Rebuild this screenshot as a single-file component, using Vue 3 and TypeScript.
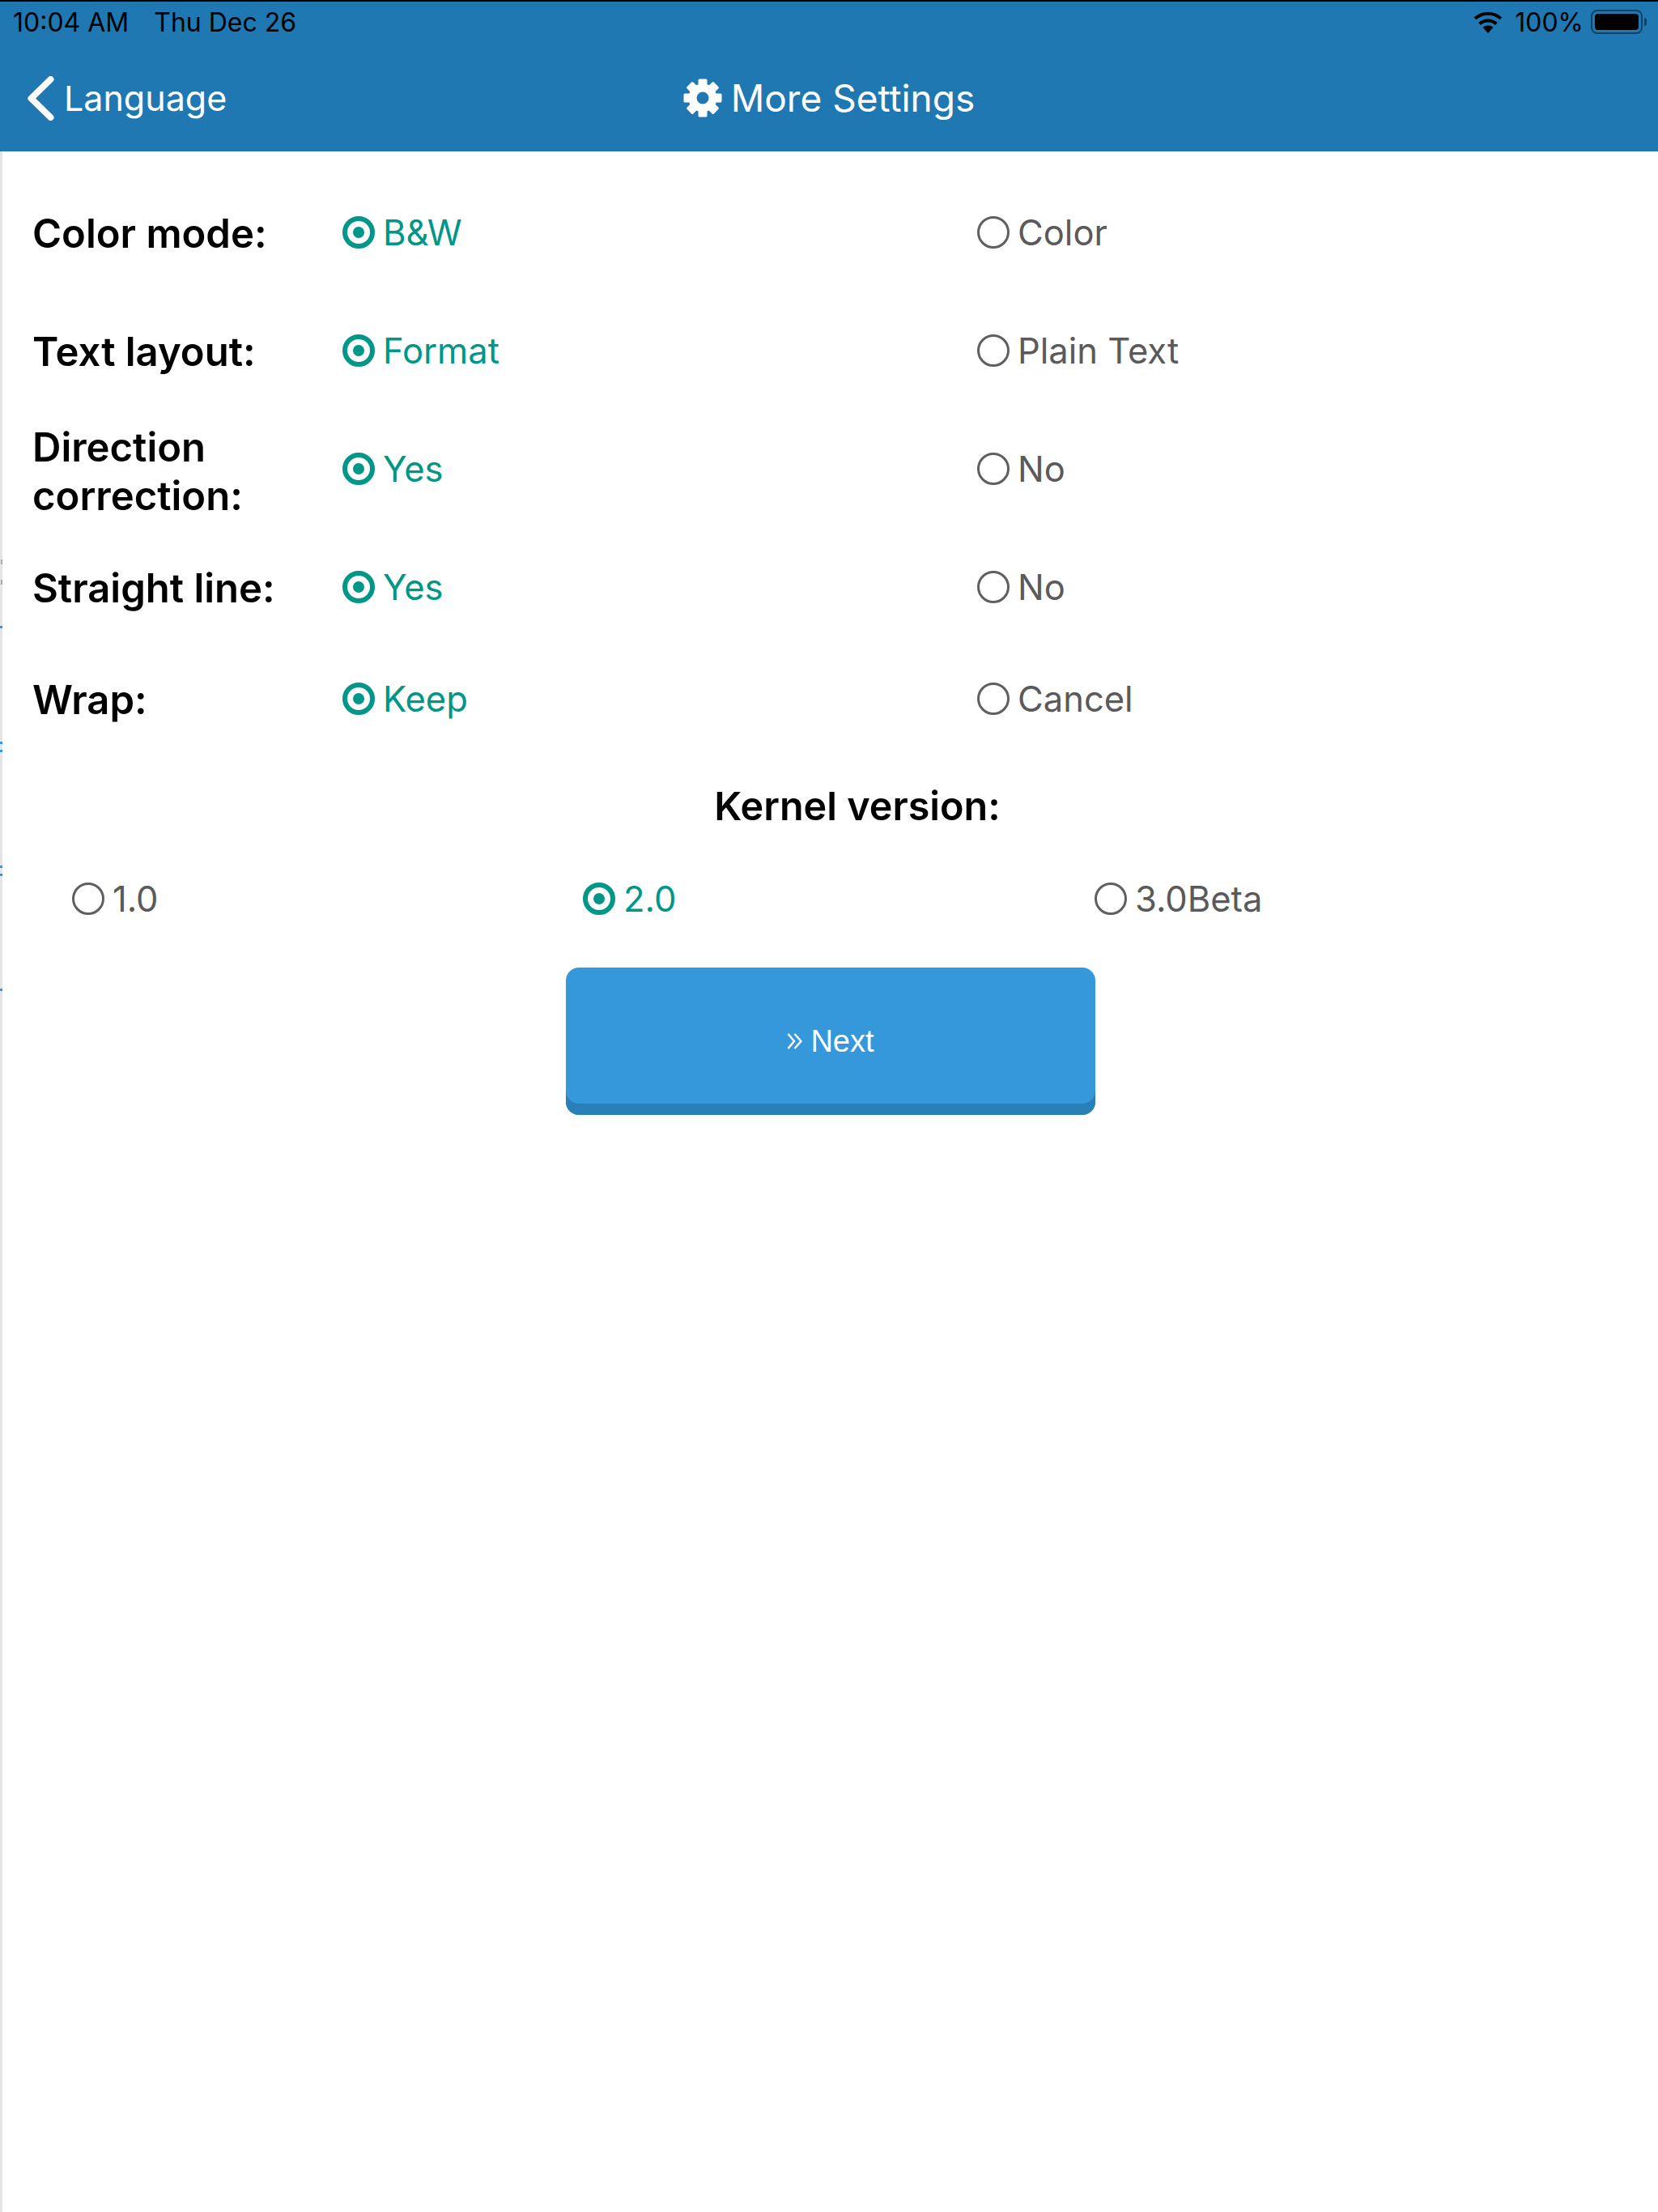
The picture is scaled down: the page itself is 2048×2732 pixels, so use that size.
<script setup lang="ts">
interface Option { text: string; on: boolean }
interface Row { label: string[]; options: Option[] }

const rows: Row[] = [
  { label: ['Color mode:'], options: [{ text: 'B&W', on: true }, { text: 'Color', on: false }] },
  { label: ['Text layout:'], options: [{ text: 'Format', on: true }, { text: 'Plain Text', on: false }] },
  { label: ['Direction', 'correction:'], options: [{ text: 'Yes', on: true }, { text: 'No', on: false }] },
  { label: ['Straight line:'], options: [{ text: 'Yes', on: true }, { text: 'No', on: false }] },
  { label: ['Wrap:'], options: [{ text: 'Keep', on: true }, { text: 'Cancel', on: false }] },
]
const kernels: Option[] = [
  { text: '1.0', on: false },
  { text: '2.0', on: true },
  { text: '3.0Beta', on: false },
]
const teeth = [0, 45, 90, 135, 180, 225, 270, 315]
const ticks = [773, 916, 926, 1069, 1079, 1221]
const marks = [691, 716]
</script>

<template>
  <div class="page">
    <header class="top">
      <div class="status">
        <div class="status-left"><span>10:04 AM</span><span>Thu Dec 26</span></div>
        <div class="status-right">
          <svg class="wifi" viewBox="0 0 36 27" width="36" height="27">
            <path d="M18 27 L11.5 19.8 A10 10 0 0 1 24.5 19.8 Z" fill="#000" />
            <path d="M7.6 15.6 A15.5 15.5 0 0 1 28.4 15.6" fill="none" stroke="#000" stroke-width="4" />
            <path d="M2 8.8 A24 24 0 0 1 34 8.8" fill="none" stroke="#000" stroke-width="4" />
          </svg>
          <span>100%</span>
          <div class="battery"><div class="battery-fill"></div></div>
          <div class="nub"></div>
        </div>
      </div>
      <nav class="nav">
        <div class="back">
          <svg class="chevron" viewBox="0 0 34 55" width="34" height="55">
            <path d="M29.5 4 L5.5 27.5 L29.5 51" fill="none" stroke="#fff" stroke-width="8" stroke-linecap="round" stroke-linejoin="round" />
          </svg>
          <span>Language</span>
        </div>
        <div class="title">
          <svg class="gear" viewBox="0 0 48 48" width="48" height="48">
            <g fill="#fff">
              <rect v-for="a in teeth" :key="a" x="18.5" y="0.5" width="11" height="12" rx="1.5" :transform="`rotate(${a} 24 24)`" />
            </g>
            <circle cx="24" cy="24" r="12.5" fill="none" stroke="#fff" stroke-width="10" />
          </svg>
          <span>More Settings</span>
        </div>
        <div></div>
      </nav>
    </header>

    <main class="content">
      <i v-for="t in ticks" :key="t" class="tick" :style="{ top: `${t - 187}px` }"></i>
      <i v-for="m in marks" :key="m" class="mark" :style="{ top: `${m - 187}px` }"></i>
      <section class="form">
        <div v-for="(row, i) in rows" :key="i" class="row" :class="{ last: i === rows.length - 1 }">
          <div class="label" :class="{ double: row.label.length > 1 }"><div v-for="l in row.label" :key="l">{{ l }}</div></div>
          <div v-for="o in row.options" :key="o.text" class="option" :class="{ on: o.on }">
            <span class="radio"></span><span class="option-text">{{ o.text }}</span>
          </div>
        </div>
      </section>

      <h2 class="kernel-title">Kernel version:</h2>
      <div class="kernels">
        <div v-for="k in kernels" :key="k.text" class="option" :class="{ on: k.on }">
          <span class="radio"></span><span class="option-text">{{ k.text }}</span>
        </div>
      </div>

      <button class="next" type="button">
        <svg viewBox="0 0 20 20" width="20" height="20">
          <path d="M1.5 1 L9 10 L1.5 19 M9.5 1 L17.5 10 L9.5 19" fill="none" stroke="#fff" stroke-width="2.4" />
        </svg>
        <span>Next</span>
      </button>
    </main>
  </div>
</template>

<style scoped>
.page {
  width: 2048px;
  min-height: 2732px;
  background: #fff;
  display: flex;
  flex-direction: column;
  font-family: Inter, "Liberation Sans", sans-serif;
}
.top {
  height: 187px;
  box-sizing: border-box;
  border-top: 2px solid #000;
  background: #1f78b1;
}
.status {
  height: 50px;
  padding: 0 14px 0 16px;
  display: flex;
  justify-content: space-between;
  align-items: center;
  font-size: 32px;
  color: #000;
}
.status-left {
  display: flex;
  gap: 31px;
}
.status-right {
  display: flex;
  align-items: center;
}
.wifi {
  margin-right: 15px;
}
.battery {
  width: 64px;
  height: 30px;
  box-sizing: border-box;
  margin-left: 9px;
  padding: 3px;
  border: 2px solid rgba(0, 0, 0, 0.45);
  border-radius: 8px;
}
.battery-fill {
  height: 100%;
  background: #000;
  border-radius: 4px;
}
.nub {
  width: 3px;
  height: 10px;
  margin-left: 2px;
  background: rgba(0, 0, 0, 0.45);
  border-radius: 0 3px 3px 0;
}
.nav {
  display: grid;
  grid-template-columns: 1fr auto 1fr;
  align-items: center;
  height: 135px;
  padding-top: 3px;
  box-sizing: border-box;
  color: #fff;
  font-size: 46px;
}
.back {
  display: flex;
  align-items: center;
  gap: 12px;
  padding-left: 33px;
  font-size: 43px;
}
.title {
  display: flex;
  align-items: center;
  gap: 11px;
}
.content {
  position: relative;
  flex: 1;
  box-sizing: border-box;
  border-left: 3px solid #e5e5e5;
  padding-top: 28px;
}
.tick {
  position: absolute;
  left: -3px;
  width: 3px;
  height: 3px;
  background: #3498db;
}
.mark {
  position: absolute;
  left: -2px;
  width: 2px;
  height: 6px;
  background: #a8a8a8;
}
.form {
  padding-left: 37px;
}
.row {
  display: grid;
  grid-template-columns: 383px 784px 1fr;
  align-items: center;
  height: 146px;
}
.row.last {
  height: 130px;
}
.label {
  font-size: 49px;
  font-weight: 600;
  line-height: 60px;
  color: #000;
  padding-top: 2px;
}
.label.double {
  padding-top: 6px;
}
.option {
  display: flex;
  align-items: center;
  gap: 10px;
  font-size: 43.5px;
  color: #5a5a5a;
}
.option-text {
  position: relative;
  top: -1px;
}
.option.on {
  color: #009688;
}
.radio {
  box-sizing: border-box;
  width: 40px;
  height: 40px;
  flex: none;
  border: 3px solid #5f5f5f;
  border-radius: 50%;
  position: relative;
  top: -1px;
}
.on .radio {
  border: 6px solid #009688;
}
.on .radio::after {
  content: "";
  position: absolute;
  inset: 7px;
  border-radius: 50%;
  background: #009688;
}
.kernel-title {
  margin: 0;
  height: 132px;
  box-sizing: border-box;
  padding-left: 67px;
  display: flex;
  align-items: center;
  justify-content: center;
  font-size: 48.5px;
  font-weight: 600;
  color: #000;
}
.kernels {
  display: grid;
  grid-template-columns: 631px 632px 1fr;
  padding-left: 86px;
  height: 100px;
  align-items: center;
}
.next {
  display: flex;
  align-items: center;
  justify-content: center;
  gap: 9px;
  margin: 34px 0 0 696px;
  width: 654px;
  height: 182px;
  box-sizing: border-box;
  border: 0;
  border-radius: 16px;
  background: #3498db;
  box-shadow: inset 0 -14px 0 #2980b9;
  color: #fff;
  font-family: "Liberation Sans", Arial, sans-serif;
  font-size: 38px;
  padding: 0;
}
</style>
